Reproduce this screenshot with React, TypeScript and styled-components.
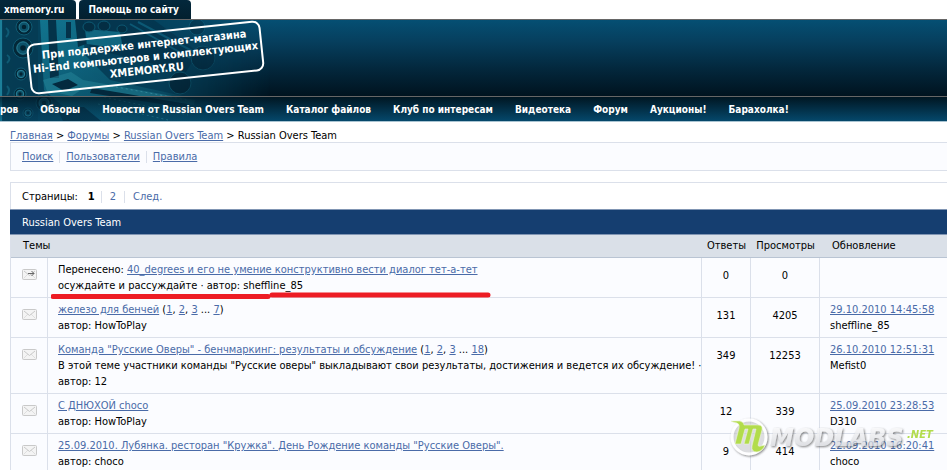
import React from 'react';
import styled, { createGlobalStyle } from 'styled-components';

const GlobalStyle = createGlobalStyle`
  body {
    margin: 0;
    overflow: hidden;
    background: #fff;
    color: #000;
    font: 11px/16px 'DejaVu Sans Condensed', 'DejaVu Sans', sans-serif;
  }
`;

const Tabs = styled.nav`
  display: flex;
  gap: 3px;
  height: 19px;
`;

const Tab = styled.a<{ $first?: boolean }>`
  padding: 2px 12px 0 ${p => (p.$first ? 4 : 9)}px;
  border-radius: ${p => (p.$first ? '0 4px 0 0' : '4px 4px 0 0')};
  background: linear-gradient(#03283c, #02202f);
  color: #fff;
  font-size: 10px;
  font-weight: bold;
  text-decoration: none;
  white-space: nowrap;
`;

const Masthead = styled.header`
  position: relative;
  overflow: hidden;
  border-bottom: 1px solid #a9c4d2;
`;

const Banner = styled.div`
  height: 76px;
  border-top: 1px solid #666;
  background: linear-gradient(#054f73, #063f5e 28%, #03273c 65%, #00131f);
`;

const BannerArt = styled.svg`
  position: absolute;
  top: 1px;
  left: 0;
  width: 270px;
  height: 101px;
`;

const Stamp = styled.p`
  position: absolute;
  top: 13px;
  left: 28px;
  box-sizing: border-box;
  width: 235px;
  margin: 0;
  padding: 4px 0;
  border: 2px solid #fff;
  border-radius: 8px;
  transform: rotate(-6deg);
  color: #fff;
  font: bold 11px/13px 'DejaVu Sans Condensed', 'DejaVu Sans', sans-serif;
  text-align: center;
  white-space: nowrap;
`;

const MainMenu = styled.nav`
  display: flex;
  gap: 22px;
  height: 24px;
  border-top: 1px solid #666;
  background: linear-gradient(#001622, #05486b);
  line-height: 25px;
`;

const MenuLink = styled.a`
  position: relative;
  color: #fff;
  font-size: 10px;
  font-weight: bold;
  text-decoration: none;
  white-space: nowrap;
`;

const Content = styled.main`
  margin-left: 10px;
`;

const TextLink = styled.a`
  color: #4a6ba8;
  text-decoration: underline;
`;

const Breadcrumbs = styled.nav`
  padding: 6px 0 0;
  height: 14px;
  white-space: nowrap;
`;

const Tools = styled.nav`
  display: flex;
  align-items: center;
  height: 27px;
  margin-bottom: 11px;
  padding-left: 11px;
  border: 1px solid #dbe0ea;
  border-right: 0;
  background: #fbfcff;
`;

const Divider = styled.span`
  width: 1px;
  height: 12px;
  margin: 0 6px;
  background: #dbe0ea;
`;

const Pager = styled.nav`
  display: flex;
  align-items: center;
  height: 25px;
  padding: 1px 0 0 11px;
  border: 1px solid #dbe0ea;
  border-width: 1px 0 0 1px;
`;

const PageCurrent = styled.strong`
  margin-left: 10px;
`;

const PageLink = styled.a`
  margin: 0 2px;
  color: #4a6ba8;
  text-decoration: none;
`;

const ForumTitle = styled.h1`
  margin: 0;
  height: 24px;
  padding-left: 12px;
  border: 1px solid #8095b3;
  border-width: 1px 0;
  background: #153e70;
  color: #fff;
  font-size: 11px;
  font-weight: normal;
  line-height: 26px;
`;

const TopicTable = styled.table`
  width: 100%;
  table-layout: fixed;
  border-collapse: separate;
  border-spacing: 0;
  border-left: 1px solid #dbe0ea;
`;

const Col = styled.col<{ $width?: number }>`
  width: ${p => (p.$width ? `${p.$width}px` : 'auto')};
`;

const HeadCell = styled.th<{ $align?: 'center' }>`
  height: 22px;
  padding: 0 0 0 ${p => (p.$align ? 0 : 12)}px;
  border-bottom: 1px solid #b9c4d3;
  background: #dae0e8;
  font-weight: normal;
  line-height: 22px;
  text-align: ${p => p.$align ?? 'left'};
`;

const Cell = styled.td<{ $last?: boolean }>`
  position: relative;
  padding: 4px 0 3px 10px;
  border-bottom: 1px solid #dbe0ea;
  border-right: ${p => (p.$last ? 0 : 1)}px solid #dbe0ea;
  background: #fbfcff;
  vertical-align: top;
  white-space: nowrap;
`;

const CountCell = styled(Cell)`
  padding: 10px 0 0;
  text-align: center;
`;

const IconCell = styled(Cell)`
  padding: 11px 0 0 11px;
  line-height: 0;
`;

const Marker = styled.svg`
  position: absolute;
  left: 3px;
  bottom: -2px;
  width: 440px;
  height: 8px;
  z-index: 1;
`;

const Watermark = styled.svg`
  position: fixed;
  right: 8px;
  bottom: 8px;
  width: 216px;
  height: 52px;
`;

function Machinery() {
  const holes = [
    [24, 7, 8], [23, 28, 10], [21, 54, 6], [20, 74, 6], [44, 83, 8], [28, 93, 5],
  ];
  return (
    <BannerArt viewBox="0 0 270 101" aria-hidden="true">
      <defs>
        <linearGradient id="fade" x1="0" x2="1" y1="0" y2="0">
          <stop offset="0" stopColor="#fff" />
          <stop offset=".6" stopColor="#ddd" />
          <stop offset="1" stopColor="#000" />
        </linearGradient>
        <linearGradient id="steel" x1="0" x2="1" y1="0" y2="1">
          <stop offset="0" stopColor="#188ba5" />
          <stop offset="1" stopColor="#06465f" />
        </linearGradient>
        <linearGradient id="shade" x1="0" x2="0" y1="0" y2="1">
          <stop offset="0" stopColor="#001622" stopOpacity=".8" />
          <stop offset="1" stopColor="#05486b" stopOpacity=".3" />
        </linearGradient>
        <mask id="fadeMask"><rect width="270" height="101" fill="url(#fade)" /></mask>
      </defs>
      <g mask="url(#fadeMask)">
        <rect width="270" height="101" fill="#05425c" />
        <path d="M0 0h2v101H0z" fill="#1c7f99" />
        <path d="M3 0h35v101H3z" fill="#053c54" />
        <path d="M40 0h42l3 35 25 25 100 22-4 19H80L44 70z" fill="url(#steel)" opacity=".7" />
        <path d="M48 0h8l3 58h-9zM66 2h5v16h-5zM75 0h9l2 24-8 3z" fill="#043248" />
        <path d="M84 0h70l44 32-12 20-96-24z" fill="#04344c" />
        <path d="M85 9l35 3 3 17-36-5z" fill="#126a83" />
        <path d="M130 4l60 34M138 2l56 30" stroke="#0d5a75" strokeWidth="2" />
        <path d="M43 60l28-8 12 8 112 20-1 5-110-17-12 8-25-5z" fill="#27899d" opacity=".55" />
        <path d="M52 64l16-5 10 6-14 6zM92 68l95 16v4L90 73z" fill="#032b3f" />
        <path d="M104 77l84 18M98 84l70 16M111 66l76 14" stroke="#4aaabb" strokeDasharray="2 3" opacity=".6" />
        <path d="M56 87h28l17 14H63z" fill="#032c40" />
        {holes.map(([x, y, r]) => (
          <g key={`${x}-${y}`}>
            <circle cx={x} cy={y} r={r} fill="#032838" stroke="#0f5b74" />
            <circle cx={x} cy={y} r={r * 0.62} fill="#0d5269" stroke="#2a8299" />
            <circle cx={x} cy={y} r={r * 0.28} fill="#022331" />
          </g>
        ))}
        <g fill="#042c40" stroke="#0e5b74">
          <ellipse cx="89" cy="7" rx="6" ry="5" />
          <ellipse cx="104" cy="6" rx="6" ry="5" />
          <ellipse cx="122" cy="9" rx="5" ry="4" />
          <circle cx="180" cy="63" r="11" />
          <circle cx="203" cy="38" r="12" />
          <circle cx="197" cy="7" r="8" />
        </g>
        <path d="M6 8q5 4 0 9M7 35q5 3 0 8M7 66q4 4 0 9" fill="none" stroke="#0f5b74" strokeWidth="2" />
      </g>
      <rect y="76" width="270" height="25" fill="url(#shade)" />
      <path d="M0 76.500h270" stroke="#666" />
    </BannerArt>
  );
}

function Envelope({ moved }: { moved?: boolean }) {
  return (
    <svg width="15" height="11" viewBox="0 0 15 11" role="img" aria-label={moved ? 'Перенесено' : 'Тема'}>
      <rect x=".5" y=".5" width="14" height="10" rx="1" fill="#f4f4f4" stroke="#c9c9c9" />
      <path d="M1.500 9.500L6 5M13.500 9.500L9 5" stroke="#dedede" />
      <path d="M2 2l5.500 4.500L13 2" fill="none" stroke="#c9c9c9" />
      {moved && <path d="M6 4.500h6M9.500 2l2.500 2.500-2.500 2.500" fill="none" stroke="#666" />}
    </svg>
  );
}

type Topic = {
  title: string;
  moved?: boolean;
  pages?: string[];
  lines: string[];
  replies: number;
  views: number;
  date?: string;
  by?: string;
};

const topics: Topic[] = [
  { title: '40_degrees и его не умение конструктивно вести диалог тет-а-тет', moved: true, lines: ['осуждайте и рассуждайте · автор: sheffline_85'], replies: 0, views: 0 },
  { title: 'железо для бенчей', pages: ['1', '2', '3', '7'], lines: ['автор: HowToPlay'], replies: 131, views: 4205, date: '29.10.2010 14:45:58', by: 'sheffline_85' },
  { title: 'Команда "Русские Оверы" - бенчмаркинг: результаты и обсуждение', pages: ['1', '2', '3', '18'], lines: ['В этой теме участники команды "Русские оверы" выкладывают свои результаты, достижения и ведется их обсуждение! ·', 'автор: 12'], replies: 349, views: 12253, date: '26.10.2010 12:51:31', by: 'Mefist0' },
  { title: 'С ДНЮХОЙ choco', lines: ['автор: HowToPlay'], replies: 12, views: 339, date: '25.09.2010 23:28:53', by: 'D310' },
  { title: '25.09.2010. Лубянка. ресторан "Кружка". День Рождение команды "Русские Оверы".', lines: ['автор: choco'], replies: 9, views: 414, date: '22.09.2010 16:20:41', by: 'choco' },
];

const menu = ['ров', 'Обзоры', 'Новости от Russian Overs Team', 'Каталог файлов', 'Клуб по интересам', 'Видеотека', 'Форум', 'Аукционы!', 'Барахолка!'];

function PageList({ pages }: { pages: string[] }) {
  return (
    <>
      {' ('}
      {pages.map((page, i) => (
        <React.Fragment key={page}>
          {i > 0 && (i === pages.length - 1 ? ' ... ' : ', ')}
          <TextLink href="#">{page}</TextLink>
        </React.Fragment>
      ))}
      {')'}
    </>
  );
}

function TopicRow({ topic }: { topic: Topic }) {
  return (
    <tr>
      <IconCell><Envelope moved={topic.moved} /></IconCell>
      <Cell>
        {topic.moved && 'Перенесено: '}
        <TextLink href="#">{topic.title}</TextLink>
        {topic.pages && <PageList pages={topic.pages} />}
        {topic.lines.map(line => <div key={line}>{line}</div>)}
        {topic.moved && (
          <Marker viewBox="0 0 440 8" aria-hidden="true">
            <path d="M2 5.500H217M221 4H437" stroke="#ed1c24" strokeWidth="5" strokeLinecap="round" />
          </Marker>
        )}
      </Cell>
      <CountCell>{topic.replies}</CountCell>
      <CountCell>{topic.views}</CountCell>
      <Cell $last>
        {topic.date && <TextLink href="#">{topic.date}</TextLink>}
        <div>{topic.by}</div>
      </Cell>
    </tr>
  );
}

function Modlabs() {
  return (
    <Watermark viewBox="0 0 216 52" role="img" aria-label="MODLABS.NET">
      <defs>
        <filter id="drop" x="-10%" y="-20%" width="120%" height="150%">
          <feDropShadow dx="1" dy="1" stdDeviation="1" floodColor="#444" floodOpacity=".9" />
        </filter>
        <linearGradient id="silver" x1="0" x2="0" y1="0" y2="1">
          <stop offset="0" stopColor="#fff" />
          <stop offset="1" stopColor="#c9cbd0" />
        </linearGradient>
      </defs>
      <g filter="url(#drop)" opacity=".75">
        <circle cx="26" cy="27" r="17" fill="#e4e6ea" fillOpacity=".6" stroke="#fff" strokeWidth="3" />
        <text x="47" y="36" fill="url(#silver)" fontFamily="DejaVu Sans" fontSize="24" fontStyle="italic" fontWeight="bold">MODLABS</text>
      </g>
      <path d="M8 11h9q4 1 4 4h14q5 0 4 5l-4 15q0 2 3 1l4-1q-2 6-8 7-6 0-5-6l4-17h-3l-4 15h-5l4-15h-3l-4 15h-6l4-16q1-4-2-5-5-1-6-2z" fill="#b2dc4c" stroke="#edf5d7" strokeWidth=".6" />
      <text x="184" y="28" fill="#b2dc4c" fontFamily="DejaVu Sans" fontSize="10" fontStyle="italic" fontWeight="bold">.NET</text>
    </Watermark>
  );
}

export default function App() {
  return (
    <>
      <GlobalStyle />
      <Tabs>
        <Tab $first href="#">xmemory.ru</Tab>
        <Tab href="#">Помощь по сайту</Tab>
      </Tabs>
      <Masthead>
        <Banner />
        <MainMenu>
          <Machinery />
          {menu.map(item => <MenuLink key={item} href="#">{item}</MenuLink>)}
        </MainMenu>
        <Stamp>
          При поддержке интернет-магазина<br />
          Hi-End компьютеров и комплектующих<br />
          XMEMORY.RU
        </Stamp>
      </Masthead>
      <Content>
        <Breadcrumbs>
          <TextLink href="#">Главная</TextLink>{' > '}
          <TextLink href="#">Форумы</TextLink>{' > '}
          <TextLink href="#">Russian Overs Team</TextLink>{' > Russian Overs Team'}
        </Breadcrumbs>
        <Tools>
          <TextLink href="#">Поиск</TextLink><Divider />
          <TextLink href="#">Пользователи</TextLink><Divider />
          <TextLink href="#">Правила</TextLink>
        </Tools>
        <Pager>
          Страницы: <PageCurrent>1</PageCurrent><Divider />
          <PageLink href="#">2</PageLink><Divider />
          <PageLink href="#">След.</PageLink>
        </Pager>
        <ForumTitle>Russian Overs Team</ForumTitle>
        <TopicTable>
          <colgroup>
            <Col $width={37} /><Col /><Col $width={49} /><Col $width={69} /><Col $width={127} />
          </colgroup>
          <thead>
            <tr>
              <HeadCell colSpan={2}>Темы</HeadCell>
              <HeadCell $align="center">Ответы</HeadCell>
              <HeadCell $align="center">Просмотры</HeadCell>
              <HeadCell>Обновление</HeadCell>
            </tr>
          </thead>
          <tbody>
            {topics.map(topic => <TopicRow key={topic.title} topic={topic} />)}
          </tbody>
        </TopicTable>
      </Content>
      <Modlabs />
    </>
  );
}
